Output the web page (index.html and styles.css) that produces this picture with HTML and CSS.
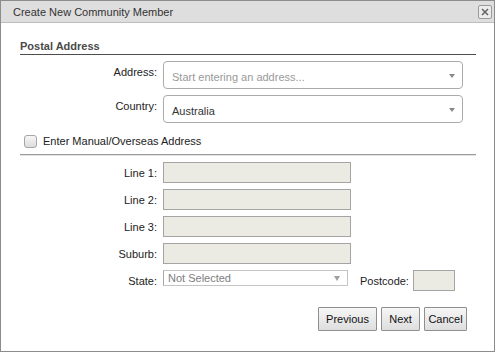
FILE: index.html
```html
<!DOCTYPE html>
<html>
<head>
<meta charset="utf-8">
<link rel="stylesheet" href="styles.css">
</head>
<body>
<div class="dialog">
  <div class="titlebar">
    <span class="title">Create New Community Member</span>
    <span class="close"><svg width="8" height="8" viewBox="0 0 8 8"><path d="M1 1L7 7M7 1L1 7" stroke="#666" stroke-width="1.6" fill="none"/></svg></span>
  </div>
  <div class="content">
    <div class="section-title">Postal Address</div>
    <div class="row row-top">
      <label class="label label-top">Address:</label>
      <div class="combo"><span class="placeholder">Start entering an address...</span><span class="arrow"></span></div>
    </div>
    <div class="row row-top">
      <label class="label label-top">Country:</label>
      <div class="combo"><span class="value">Australia</span><span class="arrow"></span></div>
    </div>
    <div class="check-row">
      <span class="checkbox"></span>
      <span class="check-label">Enter Manual/Overseas Address</span>
    </div>
    <div class="separator"></div>
    <div class="row">
      <label class="label">Line 1:</label>
      <div class="input"></div>
    </div>
    <div class="row">
      <label class="label">Line 2:</label>
      <div class="input"></div>
    </div>
    <div class="row">
      <label class="label">Line 3:</label>
      <div class="input"></div>
    </div>
    <div class="row">
      <label class="label">Suburb:</label>
      <div class="input"></div>
    </div>
    <div class="row">
      <label class="label">State:</label>
      <div class="state-select"><span class="muted">Not Selected</span><span class="small-arrow"></span></div>
      <label class="postcode-label">Postcode:</label>
      <div class="input postcode"></div>
    </div>
    <div class="buttons">
      <button class="btn btn-prev">Previous</button>
      <button class="btn btn-next">Next</button>
      <button class="btn btn-cancel">Cancel</button>
    </div>
  </div>
</div>
</body>
</html>
```
FILE: styles.css
```css
html, body {
  margin: 0;
  padding: 0;
  background: #ffffff;
}
body {
  font-family: "Liberation Sans", Arial, sans-serif;
  font-size: 11px;
  line-height: 14px;
  color: #222222;
}
.dialog {
  width: 495px;
  height: 352px;
  box-sizing: border-box;
  border: 1px solid #8c8c8c;
  background: #ffffff;
  display: flex;
  flex-direction: column;
}
.titlebar {
  height: 21px;
  background: #dedede;
  border-bottom: 1px solid #bdbdbd;
  display: flex;
  align-items: center;
  justify-content: space-between;
  padding: 0 2px 0 12px;
}
.title {
  color: #333333;
}
.close {
  width: 12px;
  height: 12px;
  border: 1px solid #9a9a9a;
  border-radius: 2px;
  background: #ececec;
  display: flex;
  align-items: center;
  justify-content: center;
}
.close svg {
  display: block;
}
.content {
  padding: 16px 18px 0 19px;
  display: flex;
  flex-direction: column;
}
.section-title {
  font-weight: bold;
  color: #4a4a4a;
  padding-bottom: 1px;
  border-bottom: 1px solid #4d4d4d;
}
.row {
  display: flex;
  align-items: center;
  margin-top: 6px;
  height: 21px;
}
.row-top {
  align-items: flex-start;
  height: 28px;
}
.label {
  width: 137px;
  margin-right: 6px;
  text-align: right;
  flex: none;
}
.label-top {
  padding-top: 4px;
}
.combo {
  width: 300px;
  height: 28px;
  box-sizing: border-box;
  border: 1px solid #ababab;
  border-radius: 4px;
  display: flex;
  align-items: center;
  justify-content: space-between;
  padding: 3px 7px 0 8px;
}
.placeholder {
  color: #999999;
}
.value {
  color: #333333;
}
.arrow {
  width: 0;
  height: 0;
  border-left: 3px solid transparent;
  border-right: 3px solid transparent;
  border-top: 4px solid #888888;
  margin-top: -2px;
}
.check-row {
  display: flex;
  align-items: center;
  margin-top: 11px;
  padding-left: 4px;
  height: 14px;
}
.checkbox {
  width: 11px;
  height: 11px;
  border: 1px solid #a6a6a6;
  border-radius: 3px;
  background: linear-gradient(#f7f7f7, #dcdcdc);
  margin-right: 6px;
}
.check-label {
  color: #222222;
}
.separator {
  margin-top: 6px;
  border-top: 1px solid #9a9a9a;
  border-bottom: 1px solid #e3e3e3;
  margin-bottom: 0;
}
.separator + .row {
  margin-top: 6px;
}
.input {
  width: 188px;
  height: 21px;
  box-sizing: border-box;
  border: 1px solid #a4a4a4;
  background: #ebebe4;
}
.state-select {
  align-self: flex-start;
  width: 185px;
  height: 16px;
  box-sizing: border-box;
  border: 1px solid #c4c4c4;
  border-left-color: #a9a9a9;
  background: #ffffff;
  display: flex;
  align-items: center;
  justify-content: space-between;
  padding: 0 7px 0 4px;
}
.muted {
  color: #7e7e7e;
}
.small-arrow {
  width: 0;
  height: 0;
  border-left: 3px solid transparent;
  border-right: 3px solid transparent;
  border-top: 5px solid #a0a0a0;
}
.postcode-label {
  margin-left: 12px;
  margin-right: 4px;
}
.postcode {
  width: 42px;
}
.buttons {
  display: flex;
  justify-content: flex-end;
  gap: 4px;
  margin-top: 16px;
  padding-right: 9px;
}
.btn {
  height: 24px;
  box-sizing: border-box;
  border: 1px solid #8f8f8f;
  border-radius: 1px;
  background: linear-gradient(#f6f6f6, #dedede);
  font-family: "Liberation Sans", Arial, sans-serif;
  font-size: 11px;
  color: #111111;
  padding: 0;
}
.btn-prev { width: 59px; }
.btn-next { width: 39px; }
.btn-cancel { width: 43px; }
```
